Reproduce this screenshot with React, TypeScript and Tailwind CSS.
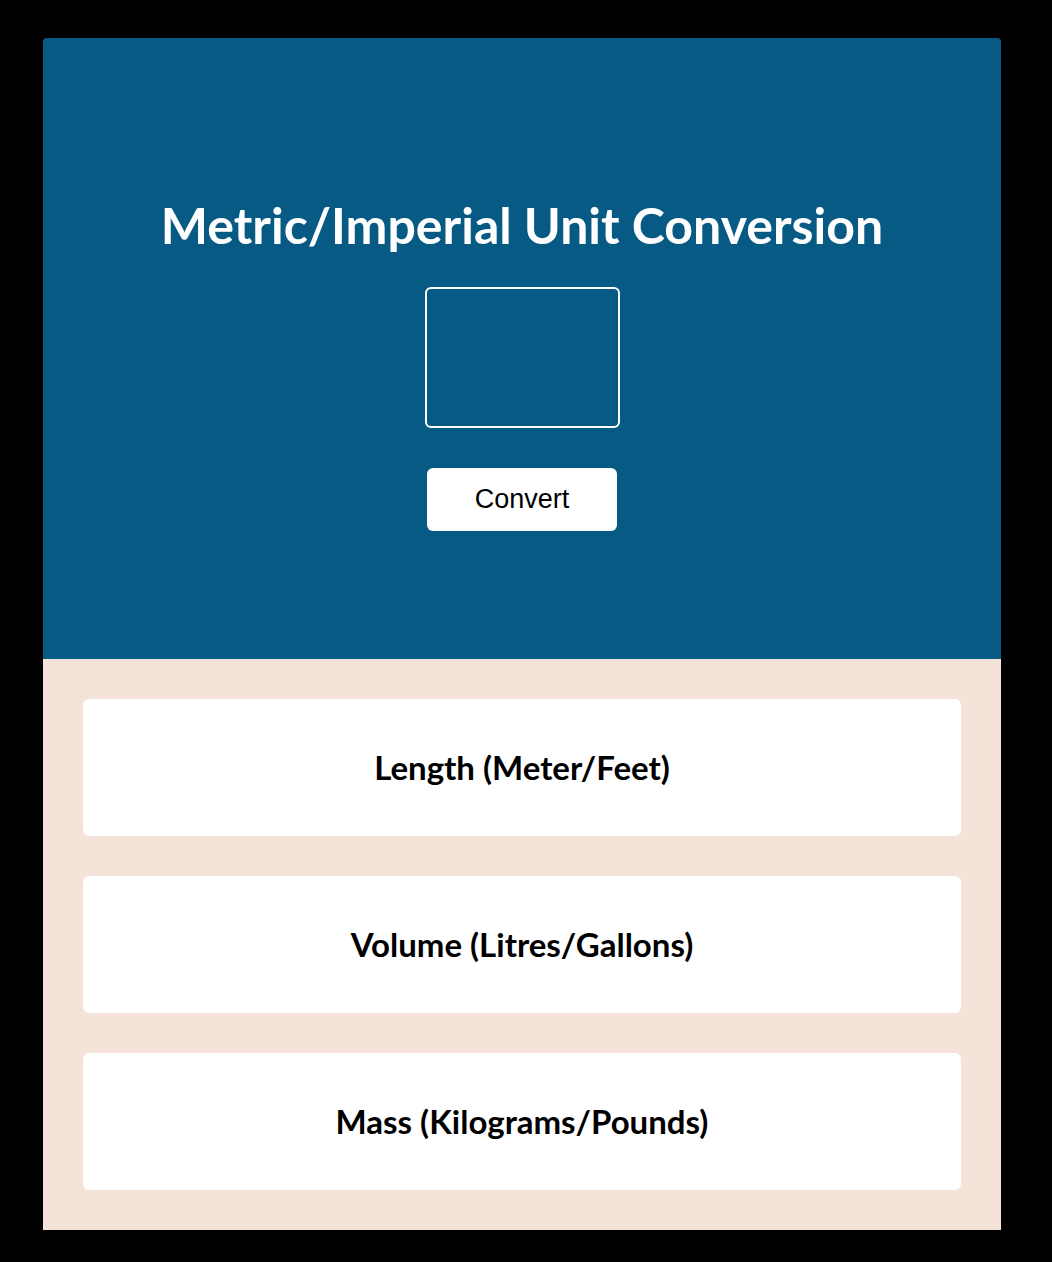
export default function App() {
  const cards = ["Length (Meter/Feet)", "Volume (Litres/Gallons)", "Mass (Kilograms/Pounds)"];
  return (
    <div className="min-h-[1262px] w-full bg-black pt-[38px] pb-[32px] pl-[43px]">
      <div className="w-[958px] font-['Lato',sans-serif]">
        <div className="flex h-[621px] flex-col items-center rounded-t-[4px] bg-[#075a84] pt-[157px]">
          <h1 className="text-[50px] font-bold leading-[60px] text-white">Metric/Imperial Unit Conversion</h1>
          <input className="mt-[32px] h-[141px] w-[195px] rounded-[6px] border-2 border-white bg-transparent" />
          <button className="mt-[40px] h-[63px] w-[190px] rounded-[6px] bg-white font-['Liberation_Sans',sans-serif] text-[27px] text-black">
            Convert
          </button>
        </div>
        <div className="flex flex-col gap-[40px] bg-[#f5e3d9] p-[40px]">
          {cards.map((c) => (
            <div key={c} className="flex h-[137px] items-center justify-center rounded-[6px] bg-white">
              <span className="text-[33px] font-bold text-black">{c}</span>
            </div>
          ))}
        </div>
      </div>
    </div>
  );
}
